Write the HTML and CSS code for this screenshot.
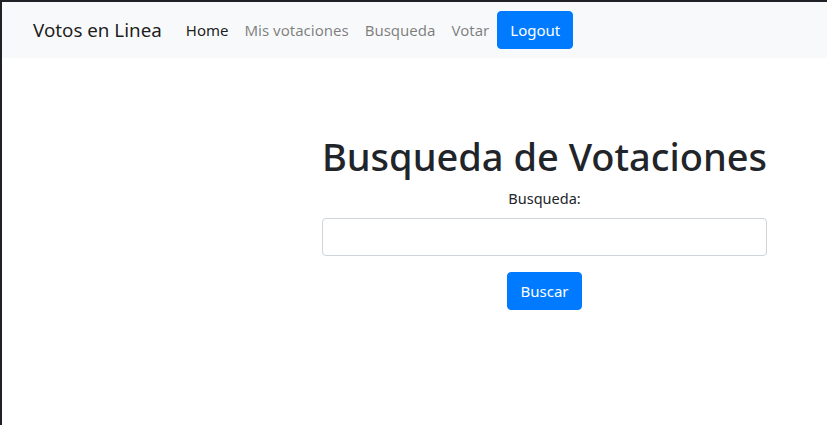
FILE: index.html
```html
<!DOCTYPE html>
<html lang="es">
<head>
<meta charset="utf-8">
<title>Votos en Linea</title>
<link rel="stylesheet" href="styles.css">
</head>
<body>
<nav class="navbar">
  <div class="nav-inner">
    <a class="brand" href="#">Votos en Linea</a>
    <ul class="nav-links">
      <li><a class="nav-link active" href="#">Home</a></li>
      <li><a class="nav-link" href="#">Mis votaciones</a></li>
      <li><a class="nav-link" href="#">Busqueda</a></li>
      <li><a class="nav-link" href="#">Votar</a></li>
      <li><button class="btn btn-primary" type="button">Logout</button></li>
    </ul>
  </div>
</nav>
<main class="content">
  <form class="search-form">
    <h1 class="title">Busqueda de Votaciones</h1>
    <label class="label" for="q">Busqueda:</label>
    <input class="input" id="q" type="text">
    <button class="btn btn-primary" type="button">Buscar</button>
  </form>
</main>
</body>
</html>
```
FILE: styles.css
```css
* { box-sizing: border-box; }
html, body { height: 100%; }
body {
  margin: 0;
  border-top: 2px solid #1e2227;
  border-left: 2px solid #1e2227;
  background: #fff;
  color: #212529;
  font-family: "Noto Sans", "Open Sans", sans-serif;
  font-size: 15px;
  line-height: 1.5;
}
.navbar {
  background: #f8f9fa;
  padding: 8px 16px;
}
.nav-inner {
  display: flex;
  align-items: center;
  padding: 0 15px;
}
.brand {
  font-size: 18.8px;
  line-height: 30px;
  padding: 5px 0;
  margin-right: 16px;
  color: rgba(0,0,0,.9);
  text-decoration: none;
}
.nav-links {
  display: flex;
  align-items: center;
  list-style: none;
  margin: 0;
  padding: 0;
}
.nav-link {
  display: block;
  padding: 8px 8px;
  line-height: 24px;
  color: rgba(0,0,0,.5);
  text-decoration: none;
}
.nav-link.active { color: rgba(0,0,0,.9); }
.btn {
  font-family: inherit;
  font-size: 15px;
  line-height: 24px;
  padding: 6px 12px;
  border: 1px solid transparent;
  border-radius: 4px;
  cursor: pointer;
}
.btn-primary {
  background: #007bff;
  border-color: #007bff;
  color: #fff;
}
.content {
  padding-left: 320px;
  padding-top: 74px;
}
.search-form {
  width: 445px;
  display: flex;
  flex-direction: column;
  align-items: center;
}
.title {
  margin: 0 0 8px;
  font-size: 38px;
  font-weight: 500;
  line-height: 48px;
  white-space: nowrap;
}
.label {
  margin-bottom: 8px;
  font-size: 14.5px;
}
.input {
  width: 100%;
  height: 38px;
  border: 1px solid #ced4da;
  border-radius: 4px;
  margin-bottom: 16px;
  font-family: inherit;
  font-size: 16px;
  padding: 6px 12px;
}
```
